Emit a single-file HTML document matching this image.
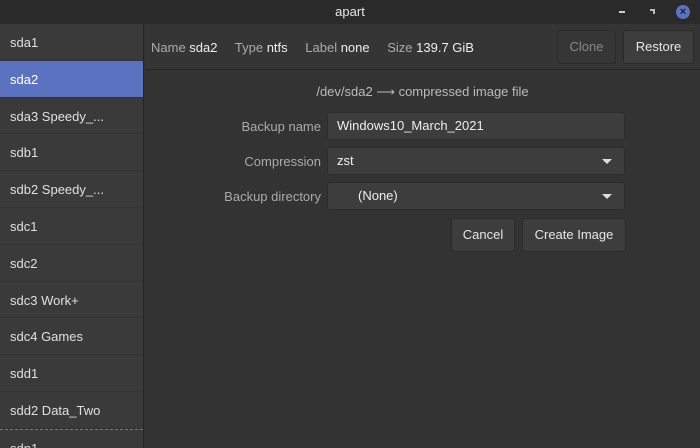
<!DOCTYPE html>
<html><head><meta charset="utf-8"><style>
*{margin:0;padding:0;box-sizing:border-box}
html,body{width:700px;height:448px;overflow:hidden}
body{background:#333;font-family:"Liberation Sans",sans-serif;font-size:13px;color:#ddd;position:relative}
.title{position:absolute;left:0;top:0;width:700px;height:24px;background:#2a2a2a;text-align:center;line-height:24px;color:#e6e6e6;font-size:13px}
.side{position:absolute;left:0;top:24px;width:144px;height:424px;background:#3a3a3a;border-right:1px solid #252525;overflow:hidden}
.row{height:36.8px;line-height:38px;padding-left:10px;border-bottom:1px solid #333;color:#e0e0e0}
.row.sel{background:#5a72c0;color:#fff}
.hdr{position:absolute;left:145px;top:24px;width:555px;height:46px;border-bottom:1px solid #262626;background:#353535}
.hdr .info{position:absolute;left:6px;top:16px;color:#aaa}
.hdr b{font-weight:normal;color:#eee;margin-right:14px}
.btn{position:absolute;background:#3d3d3d;border:1px solid #2a2a2a;border-radius:3px;text-align:center;color:#e6e6e6}
.inp{position:absolute;left:327px;width:298px;background:#3d3d3d;border:1px solid #2c2c2c;border-radius:3px;padding-left:9px;color:#eee}
.lbl{position:absolute;right:379px;color:#aaa}
.arr{position:absolute;right:12px;top:11px;width:0;height:0;border-left:5px solid transparent;border-right:5px solid transparent;border-top:5px solid #ddd}
</style></head><body>
<div class="title">apart</div>
<div style="position:absolute;left:619px;top:11px;width:6px;height:2px;background:#ccc"></div>
<div style="position:absolute;left:650px;top:9px;width:5px;height:5px;border-top:2px solid #bbb;border-right:2px solid #bbb"></div>
<div style="position:absolute;left:676px;top:5px;width:14px;height:14px;border-radius:50%;background:#5a72c0;color:#222;font-size:11px;line-height:14px;text-align:center;font-weight:bold">×</div>
<div class="side">
<div class="row">sda1</div><div class="row sel">sda2</div><div class="row">sda3 Speedy_...</div><div class="row">sdb1</div><div class="row">sdb2 Speedy_...</div><div class="row">sdc1</div><div class="row">sdc2</div><div class="row">sdc3 Work+</div><div class="row">sdc4 Games</div><div class="row">sdd1</div><div class="row">sdd2 Data_Two</div><div class="row" style="border-top:1px dashed #777">sdn1</div>
</div>
<div class="hdr"><div class="info">Name <b>sda2</b> Type <b>ntfs</b> Label <b>none</b> Size <b>139.7 GiB</b></div></div>
<div class="btn" style="left:557px;top:30px;width:59px;height:34px;line-height:32px;color:#888;background:#363636">Clone</div>
<div class="btn" style="left:623px;top:30px;width:71px;height:34px;line-height:32px">Restore</div>
<div style="position:absolute;left:145px;width:555px;top:84px;text-align:center;color:#bbb">/dev/sda2 ⟶ compressed image file</div>
<div class="lbl" style="top:119px">Backup name</div>
<div class="inp" style="top:112px;height:28px;line-height:26px">Windows10_March_2021</div>
<div class="lbl" style="top:154px">Compression</div>
<div class="inp" style="top:147px;height:28px;line-height:26px">zst<div class="arr"></div></div>
<div class="lbl" style="top:189px">Backup directory</div>
<div class="inp" style="top:182px;height:28px;line-height:26px;padding-left:30px">(None)<div class="arr"></div></div>
<div class="btn" style="left:451px;top:218px;width:64px;height:34px;line-height:32px">Cancel</div>
<div class="btn" style="left:522px;top:218px;width:104px;height:34px;line-height:32px">Create Image</div>
</body></html>
